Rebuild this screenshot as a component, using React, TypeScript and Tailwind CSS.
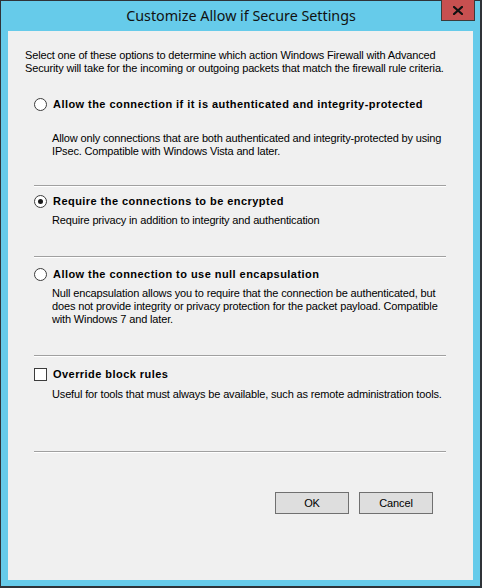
import { useState } from "react";

const body = { fontFamily: '"Liberation Sans", Arial, sans-serif' };

function Radio({ checked }: { checked: boolean }) {
  return (
    <span className="flex h-[13px] w-[13px] shrink-0 items-center justify-center rounded-full border border-[#3c3c3c] bg-white">
      {checked && <span className="h-[5px] w-[5px] rounded-full bg-[#1a1a1a]" />}
    </span>
  );
}

function Separator({ mt }: { mt: string }) {
  return <div className={`ml-[26px] w-[412px] border-t border-b border-t-[#a0a0a0] border-b-white ${mt}`} />;
}

export default function App() {
  const [choice, setChoice] = useState(1);
  const [override, setOverride] = useState(false);

  const options = [
    {
      label: "Allow the connection if it is authenticated and integrity-protected",
      desc: [
        "Allow only connections that are both authenticated and integrity-protected by using",
        "IPsec. Compatible with Windows Vista and later.",
      ],
      labelMt: "mt-[23px]",
      descMt: "mt-[21px]",
      sepMt: "mt-[27px]",
    },
    {
      label: "Require the connections to be encrypted",
      desc: ["Require privacy in addition to integrity and authentication"],
      labelMt: "mt-[8px]",
      descMt: "mt-[6px]",
      sepMt: "mt-[29px]",
    },
    {
      label: "Allow the connection to use null encapsulation",
      desc: [
        "Null encapsulation allows you to require that the connection be authenticated, but",
        "does not provide integrity or privacy protection for the packet payload. Compatible",
        "with Windows 7 and later.",
      ],
      labelMt: "mt-[10px]",
      descMt: "mt-[6px]",
      sepMt: "mt-[29px]",
    },
  ];

  return (
    <div className="relative h-[588px] w-[482px] bg-[#2f3338] pb-[2px] pl-px pr-[2px] pt-px">
      <div className="flex h-full flex-col bg-[#66cbea] px-[7px] pb-[6px]">
        <div
          className="flex h-[30px] items-center justify-center pl-[1px] text-[14.3px] text-[#111]"
          style={{ fontFamily: '"Noto Sans", "Open Sans", sans-serif' }}
        >
          Customize Allow if Secure Settings
        </div>
        <div
          className="flex-1 bg-[#f0f0f0] text-[11px] leading-[13px] tracking-[-0.15px] text-black"
          style={body}
        >
          <p className="ml-[17px] mt-[18px]">
            Select one of these options to determine which action Windows Firewall with Advanced
            <br />
            Security will take for the incoming or outgoing packets that match the firewall rule criteria.
          </p>

          {options.map((o, i) => (
            <div key={i}>
              {i > 0 && <Separator mt={options[i - 1].sepMt} />}
              <label
                className={`ml-[26px] flex cursor-default items-center gap-[6px] font-bold tracking-[0.45px] ${o.labelMt}`}
                onClick={() => setChoice(i)}
              >
                <Radio checked={choice === i} />
                <span>{o.label}</span>
              </label>
              <p className={`ml-[44px] ${o.descMt}`}>
                {o.desc.map((d, j) => (
                  <span key={j} className="block h-[13px]">
                    {d}
                  </span>
                ))}
              </p>
            </div>
          ))}

          <Separator mt={options[2].sepMt} />
          <label
            className="ml-[26px] mt-[11px] flex cursor-default items-center gap-[6px] font-bold tracking-[0.45px]"
            onClick={() => setOverride(!override)}
          >
            <span className="flex h-[13px] w-[13px] shrink-0 items-center justify-center border border-[#3c3c3c] bg-white">
              {override && (
                <svg width="9" height="9" viewBox="0 0 9 9">
                  <path d="M1 4.5 L3.5 7 L8 1.5" fill="none" stroke="#111" strokeWidth="1.6" />
                </svg>
              )}
            </span>
            <span>Override block rules</span>
          </label>
          <p className="ml-[44px] mt-[7px]">
            Useful for tools that must always be available, such as remote administration tools.
          </p>

          <Separator mt="mt-[50px]" />

          <div className="ml-[267px] mt-[39px] flex gap-[10px]">
            <button className="h-[22px] w-[74px] border border-[#707070] bg-[#dedede] text-[11px]" style={body}>
              OK
            </button>
            <button className="h-[22px] w-[74px] border border-[#707070] bg-[#dedede] text-[11px]" style={body}>
              Cancel
            </button>
          </div>
        </div>
      </div>

      <button className="absolute left-[441px] top-0 flex h-[21px] w-[34px] items-center justify-center border border-[#3b3b3b] border-t-0 bg-[#c75050]">
        <svg width="10" height="9" viewBox="0 0 10 9">
          <path d="M1 1 L9 8 M9 1 L1 8" stroke="#111" strokeWidth="2.2" strokeLinecap="square" />
        </svg>
      </button>
    </div>
  );
}
